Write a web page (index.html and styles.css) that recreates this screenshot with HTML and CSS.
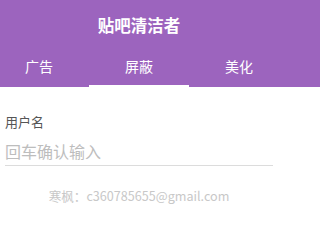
FILE: index.html
```html
<!DOCTYPE html>
<html lang="zh">
<head>
<meta charset="utf-8">
<title>贴吧清洁者</title>
<link rel="stylesheet" href="styles.css">
</head>
<body>
<header class="header">
  <div class="wrap">
    <h1 class="title">贴吧清洁者</h1>
    <nav class="tabs">
      <div class="tab">广告</div>
      <div class="tab active">屏蔽</div>
      <div class="tab">美化</div>
    </nav>
  </div>
</header>
<main class="wrap content">
  <label class="label" for="user">用户名</label>
  <input class="field" id="user" type="text" placeholder="回车确认输入">
  <p class="footer">寒枫：c360785655@gmail.com</p>
</main>
</body>
</html>
```
FILE: styles.css
```css
html, body {
  margin: 0;
  padding: 0;
  background: #fff;
  font-family: "Noto Sans CJK SC", "Noto Sans", sans-serif;
}
.wrap {
  width: 278px;
  box-sizing: border-box;
}
.header {
  background: #9c64be;
  overflow: hidden;
}
.title {
  margin: 0;
  height: 50px;
  line-height: 50px;
  text-align: center;
  color: #fff;
  font-size: 16.5px;
  font-weight: bold;
}
.tabs {
  display: flex;
  justify-content: center;
  height: 37px;
}
.tab {
  flex: 0 0 100px;
  position: relative;
  text-align: center;
  color: #fff;
  font-size: 14px;
  line-height: 32px;
}
.tab.active::after {
  content: "";
  position: absolute;
  left: 0;
  right: 0;
  bottom: 0;
  height: 2px;
  background: #fff;
}
.content {
  padding: 26px 5px 0;
  display: flex;
  flex-direction: column;
}
.label {
  font-size: 13px;
  line-height: 18px;
  color: #555;
}
.field {
  margin-top: 5px;
  height: 30px;
  box-sizing: border-box;
  border: 0;
  border-bottom: 1px solid #dcdcdc;
  padding: 0;
  outline: none;
  font-family: inherit;
  font-size: 16px;
  color: #333;
  background: transparent;
}
.field::placeholder {
  color: #bdbdbd;
}
.footer {
  margin: 21px 0 0;
  text-align: center;
  font-size: 12.6px;
  line-height: 18px;
  color: #c8c8c8;
}
```
